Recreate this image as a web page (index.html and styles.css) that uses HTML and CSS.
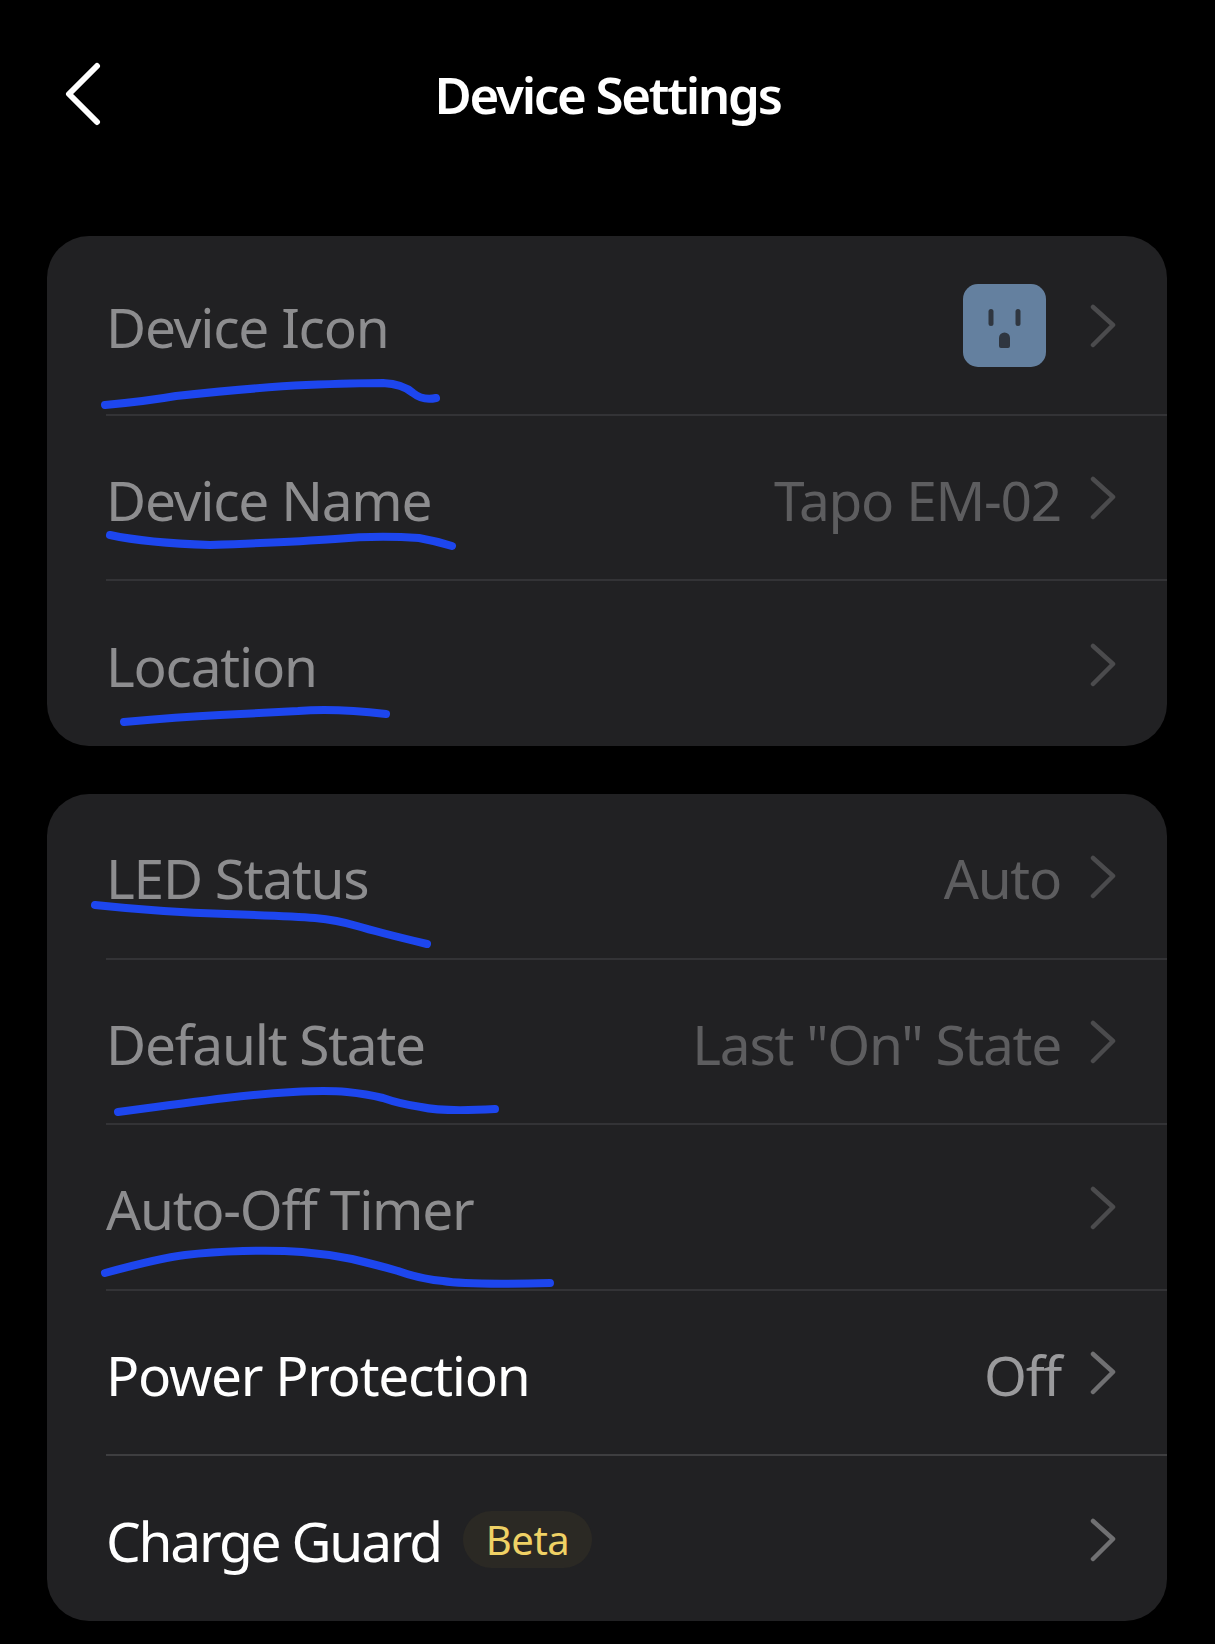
FILE: index.html
```html
<!DOCTYPE html>
<html lang="en">
<head>
    <meta charset="UTF-8">
    <title>Device Settings</title>
    <link rel="stylesheet" href="styles.css">
</head>
<body>
<main class="page">
    <header class="topbar">
        <svg class="back" width="38" height="66" viewBox="0 0 38 66"><path d="M33 4 L5 32 L33 60"/></svg>
        <h1>Device Settings</h1>
    </header>

    <section class="card">
        <div class="row row-first dim">
            <span class="label">Device Icon</span>
            <span class="tile">
                <svg width="83" height="83" viewBox="0 0 83 83"><rect x="25.500" y="25" width="5" height="17" rx="2.500"/><rect x="52.500" y="25" width="5" height="17" rx="2.500"/><path d="M36 62 V54 a5.500 5.500 0 0 1 11 0 V62 a2 2 0 0 1 -2 2 H38 a2 2 0 0 1 -2 -2 Z"/></svg>
            </span>
            <svg class="chev" width="26" height="44" viewBox="0 0 26 44"><path d="M3 3 L23 21 L3 41"/></svg>
        </div>
        <div class="row dim">
            <span class="label">Device Name</span>
            <span class="value">Tapo EM-02</span>
            <svg class="chev" width="26" height="44" viewBox="0 0 26 44"><path d="M3 3 L23 21 L3 41"/></svg>
        </div>
        <div class="row dim">
            <span class="label">Location</span>
            <svg class="chev" width="26" height="44" viewBox="0 0 26 44"><path d="M3 3 L23 21 L3 41"/></svg>
        </div>
    </section>

    <section class="card">
        <div class="row dim">
            <span class="label">LED Status</span>
            <span class="value">Auto</span>
            <svg class="chev" width="26" height="44" viewBox="0 0 26 44"><path d="M3 3 L23 21 L3 41"/></svg>
        </div>
        <div class="row dim">
            <span class="label">Default State</span>
            <span class="value">Last "On" State</span>
            <svg class="chev" width="26" height="44" viewBox="0 0 26 44"><path d="M3 3 L23 21 L3 41"/></svg>
        </div>
        <div class="row dim">
            <span class="label">Auto-Off Timer</span>
            <svg class="chev" width="26" height="44" viewBox="0 0 26 44"><path d="M3 3 L23 21 L3 41"/></svg>
        </div>
        <div class="row">
            <span class="label">Power Protection</span>
            <span class="value">Off</span>
            <svg class="chev" width="26" height="44" viewBox="0 0 26 44"><path d="M3 3 L23 21 L3 41"/></svg>
        </div>
        <div class="row">
            <span class="label label-beta">Charge Guard</span>
            <span class="badge">Beta</span>
            <svg class="chev" width="26" height="44" viewBox="0 0 26 44"><path d="M3 3 L23 21 L3 41"/></svg>
        </div>
    </section>

    <!-- pen marks drawn over the screenshot -->
    <svg class="scribbles" width="1215" height="1644" viewBox="0 0 1215 1644">
        <path d="M105 405 Q148 401 176 396 Q262 387 306 385 Q356 383 383 383 Q403 384 413 393 Q423 401 436 398"/>
        <path d="M110 535 Q147 543 210 545 Q294 542 335 539 Q377 535 419 538 Q436 541 452 546"/>
        <path d="M124 722 Q178 717 220 715 Q262 713 298 711 Q335 708 386 714"/>
        <path d="M95 905 Q160 912 227 914 Q293 916 315 918 Q337 920 357 926 Q377 932 427 944"/>
        <path d="M118 1112 Q193 1102 226 1098 Q260 1094 293 1092 Q327 1090 347 1092 Q367 1094 383 1098 Q400 1104 421 1107 Q443 1112 495 1109"/>
        <path d="M105 1273 Q160 1258 185 1255 Q210 1252 243 1251 Q277 1250 302 1252 Q327 1254 352 1259 Q377 1265 398 1271 Q420 1279 443 1281 Q467 1285 550 1283"/>
    </svg>
</main>
</body>
</html>
```
FILE: styles.css
```css
* {
    box-sizing: border-box;
}

html {
    background-color: #000;
    color: #fff;
    font-family: "Noto Sans", sans-serif;
}

body {
    margin: 0;
}

.page {
    position: relative;
    height: 1644px;
    overflow: hidden;
    padding: 0 48px 0 47px;
}

.topbar {
    display: grid;
    grid-template-columns: 1fr auto 1fr;
    height: 236px;
    margin: 0 -48px 0 -47px;
    padding-top: 62px;
    align-items: start;
}

.back {
    margin-left: 64px;
}

.topbar h1 {
    margin: -2px 0 0;
    font-size: 51px;
    line-height: 68px;
    font-weight: 600;
    letter-spacing: -2.3px;
}

.back path {
    fill: none;
    stroke: #fff;
    stroke-width: 6;
    stroke-linecap: round;
    stroke-linejoin: round;
}

.card {
    background-color: #212123;
    border-radius: 42px;
    margin-bottom: 48px;
}

.row {
    display: flex;
    align-items: center;
    height: 165.5px;
    margin-left: 59px;
    padding-right: 51px;
    border-bottom: 2px solid #3e3e40;
    font-size: 55px;
    letter-spacing: -1.25px;
}

.dim {
    border-bottom-color: #333336;
}

.row:last-child {
    height: 165px;
    border-bottom: none;
}

.row-first {
    height: 179.5px;
}

.label {
    margin-right: auto;
    padding-top: 4px;
}

.dim .label {
    color: #8d8d8f;
}

.label-beta {
    margin-right: 22px;
    letter-spacing: -2.2px;
}

.value {
    color: #9a9a9c;
    padding-top: 4px;
}

.dim .value {
    color: #5d5d5f;
}

.tile {
    display: block;
    width: 83px;
    height: 83px;
    margin: 2px 15px 0 0;
    border-radius: 15px;
    background-color: #64809f;
}

.tile svg {
    display: block;
    fill: #2f3640;
}

.chev {
    margin: 2px 0 0 29px;
    flex: none;
}

.chev path {
    fill: none;
    stroke: #707072;
    stroke-width: 4.5;
    stroke-linecap: round;
    stroke-linejoin: round;
}

.dim .chev path {
    stroke: #4b4b4d;
}

.badge {
    margin: 2px auto 0 0;
    height: 57px;
    padding: 0 23px;
    border-radius: 29px;
    background-color: #2b2924;
    color: #efd165;
    font-size: 40px;
    line-height: 57px;
    letter-spacing: -0.5px;
}

.scribbles {
    position: absolute;
    top: 0;
    left: 0;
    pointer-events: none;
}

.scribbles path {
    fill: none;
    stroke: #1d46ee;
    stroke-width: 8;
    stroke-linecap: round;
    stroke-linejoin: round;
}
```
